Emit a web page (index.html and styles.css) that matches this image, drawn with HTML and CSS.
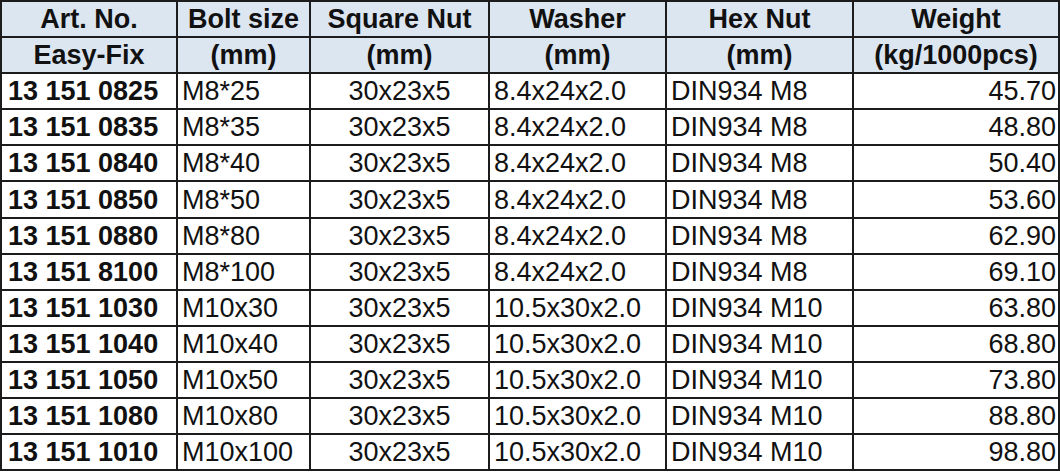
FILE: index.html
```html
<!DOCTYPE html>
<html>
<head>
<meta charset="utf-8">
<link rel="stylesheet" href="styles.css">
</head>
<body>
<table class="spec">
  <colgroup>
    <col class="c1"><col class="c2"><col class="c3"><col class="c4"><col class="c5"><col class="c6">
  </colgroup>
  <thead>
    <tr><th>Art. No.</th><th>Bolt size</th><th>Square Nut</th><th>Washer</th><th>Hex Nut</th><th>Weight</th></tr>
    <tr><th>Easy-Fix</th><th>(mm)</th><th>(mm)</th><th>(mm)</th><th>(mm)</th><th>(kg/1000pcs)</th></tr>
  </thead>
  <tbody>
    <tr><td class="art">13 151 0825</td><td>M8*25</td><td class="ctr">30x23x5</td><td>8.4x24x2.0</td><td>DIN934 M8</td><td class="num">45.70</td></tr>
    <tr><td class="art">13 151 0835</td><td>M8*35</td><td class="ctr">30x23x5</td><td>8.4x24x2.0</td><td>DIN934 M8</td><td class="num">48.80</td></tr>
    <tr><td class="art">13 151 0840</td><td>M8*40</td><td class="ctr">30x23x5</td><td>8.4x24x2.0</td><td>DIN934 M8</td><td class="num">50.40</td></tr>
    <tr><td class="art">13 151 0850</td><td>M8*50</td><td class="ctr">30x23x5</td><td>8.4x24x2.0</td><td>DIN934 M8</td><td class="num">53.60</td></tr>
    <tr><td class="art">13 151 0880</td><td>M8*80</td><td class="ctr">30x23x5</td><td>8.4x24x2.0</td><td>DIN934 M8</td><td class="num">62.90</td></tr>
    <tr><td class="art">13 151 8100</td><td>M8*100</td><td class="ctr">30x23x5</td><td>8.4x24x2.0</td><td>DIN934 M8</td><td class="num">69.10</td></tr>
    <tr><td class="art">13 151 1030</td><td>M10x30</td><td class="ctr">30x23x5</td><td>10.5x30x2.0</td><td>DIN934 M10</td><td class="num">63.80</td></tr>
    <tr><td class="art">13 151 1040</td><td>M10x40</td><td class="ctr">30x23x5</td><td>10.5x30x2.0</td><td>DIN934 M10</td><td class="num">68.80</td></tr>
    <tr><td class="art">13 151 1050</td><td>M10x50</td><td class="ctr">30x23x5</td><td>10.5x30x2.0</td><td>DIN934 M10</td><td class="num">73.80</td></tr>
    <tr><td class="art">13 151 1080</td><td>M10x80</td><td class="ctr">30x23x5</td><td>10.5x30x2.0</td><td>DIN934 M10</td><td class="num">88.80</td></tr>
    <tr><td class="art">13 151 1010</td><td>M10x100</td><td class="ctr">30x23x5</td><td>10.5x30x2.0</td><td>DIN934 M10</td><td class="num">98.80</td></tr>
  </tbody>
</table>
</body>
</html>
```
FILE: styles.css
```css
html, body {
  margin: 0;
  padding: 0;
  background: #ffffff;
}
.spec {
  border-collapse: collapse;
  table-layout: fixed;
  width: 1058px;
  font-family: "Liberation Sans", Arial, sans-serif;
  font-size: 27px;
  color: #111;
}
.c1 { width: 176px; }
.c2 { width: 133px; }
.c3 { width: 179px; }
.c4 { width: 177px; }
.c5 { width: 187px; }
.c6 { width: 206px; }
.spec th, .spec td {
  border: 2px solid #1c1c1c;
  height: 36.1px;
  padding: 0 4px;
  line-height: 30px;
  white-space: nowrap;
  overflow: hidden;
  box-sizing: border-box;
}
.spec th {
  background: #dce6f1;
  font-weight: bold;
  text-align: center;
  color: #111;
}
.spec td { text-align: left; }
.spec td.art { font-weight: bold; padding-left: 6px; }
.spec td.ctr { text-align: center; }
.spec td.num { text-align: right; padding-right: 2px; }
```
